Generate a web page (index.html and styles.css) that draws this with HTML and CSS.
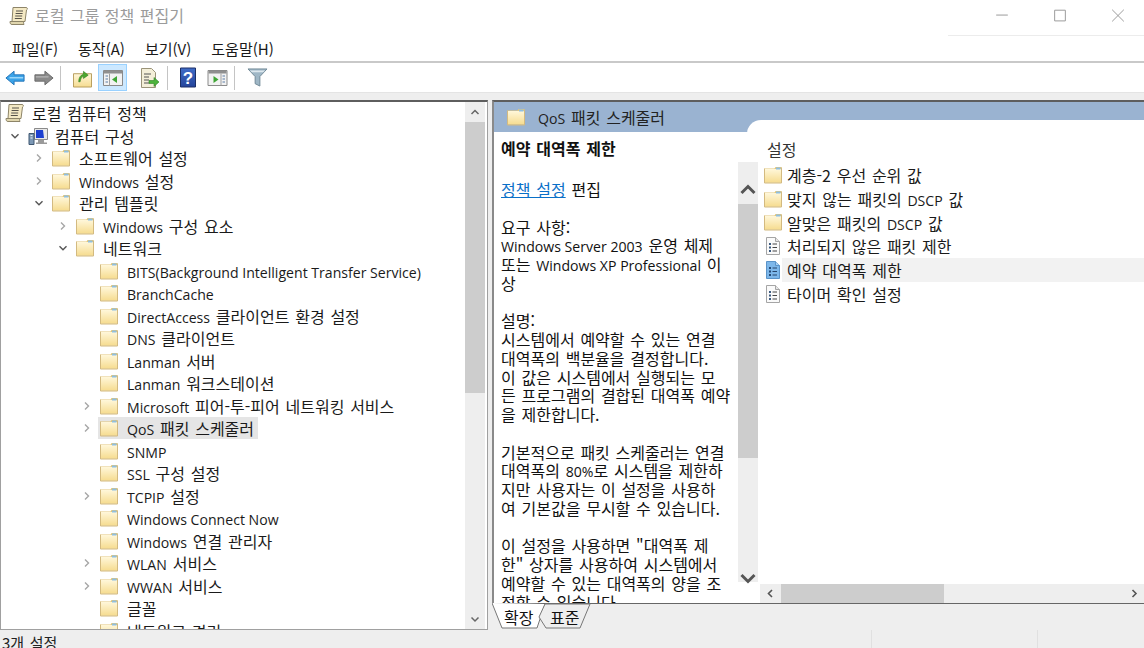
FILE: index.html
```html
<!DOCTYPE html>
<html lang="ko">
<head>
<meta charset="utf-8">
<title>로컬 그룹 정책 편집기</title>
<link rel="stylesheet" href="styles.css">
</head>
<body>
<svg class="defs" width="0" height="0" aria-hidden="true">
  <defs>
    <linearGradient id="fg" x1="0" y1="0" x2="0" y2="1"><stop offset="0" stop-color="#fff7da"/><stop offset="1" stop-color="#f6dc90"/></linearGradient>
    <linearGradient id="hg" x1="0" y1="0" x2="0" y2="1"><stop offset="0" stop-color="#3f6cc8"/><stop offset="1" stop-color="#24449a"/></linearGradient>
    <symbol id="folder" viewBox="0 0 18 18">
      <path d="M.5 2.5h10l1-1.5h5.8a.7.7 0 0 1 .2.5V16.500H.5z" fill="#e4c678"/>
      <path d="M1 3h16v13.500H1z" fill="url(#fg)"/>
      <path d="M.5 2.500V17h17V1.500" fill="none" stroke="#d3ba80"/>
      <path d="M12 1.500h4.500v2H12z" fill="#8fbfe0"/>
    </symbol>
    <symbol id="scroll" viewBox="0 0 20 20">
      <path d="M4 1.500h13c1.500 0 2 1.800.5 2.500L16 15.500H3z" fill="#f4e9c4" stroke="#8d8468"/>
      <path d="M1 15.500h13.500c0 2 .5 3 .5 3H3c-1.500 0-2-1-2-3z" fill="#e0d6ae" stroke="#8d8468"/>
      <path d="M7 5h7M6.600 7.500h7M6.200 10h7M5.800 12.500h7" stroke="#56524a" stroke-width="1"/>
    </symbol>
    <symbol id="doc" viewBox="0 0 18 18">
      <path d="M2.500.5h9l4 4v13h-13z" fill="#fafafa" stroke="#a5a5a5"/>
      <path d="M11.500.5v4h4" fill="#e6e6e6" stroke="#a5a5a5"/>
      <path d="M5 6h2v2H5zM5 9.500h2v2H5zM5 13h2v2H5z" fill="#3b5a80"/>
      <path d="M8.500 7h4.500M8.500 10.500h4.500M8.500 14h4.500" stroke="#444" stroke-width="1"/>
    </symbol>
    <symbol id="docsel" viewBox="0 0 18 18">
      <path d="M2.500.5h9l4 4v13h-13z" fill="#7db7ea" stroke="#5a93c8"/>
      <path d="M11.500.5v4h4" fill="#a9d1f2" stroke="#5a93c8"/>
      <path d="M5 6h2v2H5zM5 9.500h2v2H5zM5 13h2v2H5z" fill="#234a78"/>
      <path d="M8.500 7h4.500M8.500 10.500h4.500M8.500 14h4.500" stroke="#27456b" stroke-width="1"/>
    </symbol>
    <symbol id="chev-r" viewBox="0 0 10 10"><path d="M3 1.500 6.500 5 3 8.500" fill="none" stroke="#a6a6a6" stroke-width="1.400"/></symbol>
    <symbol id="chev-d" viewBox="0 0 10 10"><path d="M1.500 3.200 5 6.700l3.500-3.500" fill="none" stroke="#555" stroke-width="1.400"/></symbol>
  </defs>
</svg>
<div class="window">
  <header class="titlebar">
    <svg class="title-icon"><use href="#scroll"/></svg>
    <span class="title-text">로컬 그룹 정책 편집기</span>
    <div class="caption">
      <svg class="cap" viewBox="0 0 46 36"><path d="M17 15.500h12" stroke="#999" stroke-width="1"/></svg>
      <svg class="cap" viewBox="0 0 46 36"><path d="M17.500 10.500h11v11h-11z" fill="none" stroke="#999" stroke-width="1"/></svg>
      <svg class="cap" viewBox="0 0 46 36"><path d="M17 10l12 12M29 10 17 22" stroke="#999" stroke-width="1"/></svg>
    </div>
  </header>
  <nav class="menubar">
    <span class="menu">파일(F)</span>
    <span class="menu">동작(A)</span>
    <span class="menu">보기(V)</span>
    <span class="menu">도움말(H)</span>
  </nav>
  <div class="toolbar">
    <svg class="tool t-back" viewBox="0 0 22 18"><path d="M1 9 10 1.500V5.500h11v7H10v4z" fill="#3ba3e8" stroke="#1f6fb5"/><path d="M5 8h15v1.500H5z" fill="#a5dcfb"/></svg>
    <svg class="tool t-fwd" viewBox="0 0 22 18"><path d="M21 9 12 1.500V5.500H1v7h11v4z" fill="#8a8a8a" stroke="#666"/><path d="M2 7h14v1.500H2z" fill="#b5b5b5"/></svg>
    <i class="tsep s1"></i>
    <svg class="tool t-up" viewBox="0 0 20 20"><path d="M.5 5.500h19v14H.5z" fill="url(#fg)" stroke="#b59b58"/><path d="M6 14c0-4 1.500-7 5-8V3l5 4-5 3.500V8C9 8.800 8 11 7.500 14z" fill="#4ba82e" stroke="#2f7a1c" stroke-width=".6"/></svg>
    <span class="tbtn"><svg class="tool-in" viewBox="0 0 20 16"><path d="M.5.500h19v15H.5z" fill="#f2f2f2" stroke="#8a8a8a"/><path d="M1 1h18v2.500H1z" fill="#8f8f8f"/><path d="M6.500 3.500v12" stroke="#a0a0a0"/><path d="M2.500 6h2.500M2.500 9h2.500M2.500 12h2.500" stroke="#5b7ca6" stroke-width="1.200"/><path d="M9 9.500 14 6v7z" fill="#3fa535"/></svg></span>
    <svg class="tool t-doc" viewBox="0 0 20 20"><path d="M1.500.5h10l4 4v15h-14z" fill="#f4efd9" stroke="#9a9379"/><path d="M4 6h7M4 9h5M4 12h5M4 15h5" stroke="#555"/><path d="M9 12.500h5V9.500l5 4.500-5 4.500v-3H9z" fill="#4db33d" stroke="#2f8423" stroke-width=".6"/></svg>
    <i class="tsep s2"></i>
    <svg class="tool t-help" viewBox="0 0 16 20"><path d="M.5.500h15v19H.5z" fill="url(#hg)" stroke="#1c2f66"/><text x="8" y="16" class="help-q">?</text></svg>
    <svg class="tool t-show" viewBox="0 0 20 16"><path d="M.5.500h19v15H.5z" fill="#f2f2f2" stroke="#8a8a8a"/><path d="M1 1h18v2.500H1z" fill="#8f8f8f"/><path d="M13.500 3.500v12" stroke="#a0a0a0"/><path d="M15 6h2.500M15 9h2.500M15 12h2.500" stroke="#5b7ca6" stroke-width="1.200"/><path d="M11 9.500 6 6v7z" fill="#3fa535"/></svg>
    <i class="tsep s3"></i>
    <svg class="tool t-filter" viewBox="0 0 22 20"><path d="M1 1h20l-7.500 8v10l-5-2.500V9z" fill="#9fb7c6" stroke="#6f8796"/><path d="M3 2.500h16l-2 2H5z" fill="#dde8ee"/></svg>
  </div>
  <div class="strip"></div>
  <main class="panes">
    <section class="tree-pane">
      <div class="tree">
        <div class="row l0"><svg class="ico root-ico"><use href="#scroll"/></svg><span class="lbl">로컬 컴퓨터 정책</span></div>
        <div class="row l1"><svg class="chev"><use href="#chev-d"/></svg><svg class="ico" viewBox="0 0 20 20"><path d="M6.500 2.500h13v11h-13z" fill="#e8e8e8" stroke="#8a8a8a"/><path d="M8 4h7l1 8H8z" fill="#1c3fd0"/><path d="M10 13.500h6v3h3v1.500H8v-1.500h2z" fill="#9a9a9a"/><path d="M1 7.500h5v11H1z" fill="#7c98b5" stroke="#3e5670"/><path d="M2.500 9.500h2M2.500 12h2" stroke="#e8eef4"/></svg><span class="lbl">컴퓨터 구성</span></div>
        <div class="row l2"><svg class="chev"><use href="#chev-r"/></svg><svg class="ico"><use href="#folder"/></svg><span class="lbl">소프트웨어 설정</span></div>
        <div class="row l2"><svg class="chev"><use href="#chev-r"/></svg><svg class="ico"><use href="#folder"/></svg><span class="lbl"><span class="en">Windows</span> 설정</span></div>
        <div class="row l2"><svg class="chev"><use href="#chev-d"/></svg><svg class="ico"><use href="#folder"/></svg><span class="lbl">관리 템플릿</span></div>
        <div class="row l3"><svg class="chev"><use href="#chev-r"/></svg><svg class="ico"><use href="#folder"/></svg><span class="lbl"><span class="en">Windows</span> 구성 요소</span></div>
        <div class="row l3"><svg class="chev"><use href="#chev-d"/></svg><svg class="ico"><use href="#folder"/></svg><span class="lbl">네트워크</span></div>
        <div class="row l4"><i class="nochev"></i><svg class="ico"><use href="#folder"/></svg><span class="lbl"><span class="en">BITS(Background Intelligent Transfer Service)</span></span></div>
        <div class="row l4"><i class="nochev"></i><svg class="ico"><use href="#folder"/></svg><span class="lbl"><span class="en">BranchCache</span></span></div>
        <div class="row l4"><i class="nochev"></i><svg class="ico"><use href="#folder"/></svg><span class="lbl"><span class="en">DirectAccess</span> 클라이언트 환경 설정</span></div>
        <div class="row l4"><i class="nochev"></i><svg class="ico"><use href="#folder"/></svg><span class="lbl"><span class="en">DNS</span> 클라이언트</span></div>
        <div class="row l4"><i class="nochev"></i><svg class="ico"><use href="#folder"/></svg><span class="lbl"><span class="en">Lanman</span> 서버</span></div>
        <div class="row l4"><i class="nochev"></i><svg class="ico"><use href="#folder"/></svg><span class="lbl"><span class="en">Lanman</span> 워크스테이션</span></div>
        <div class="row l4"><svg class="chev"><use href="#chev-r"/></svg><svg class="ico"><use href="#folder"/></svg><span class="lbl"><span class="en">Microsoft</span> 피어-투-피어 네트워킹 서비스</span></div>
        <div class="row l4"><svg class="chev"><use href="#chev-r"/></svg><span class="sel"><svg class="ico"><use href="#folder"/></svg><span class="lbl"><span class="en">QoS</span> 패킷 스케줄러</span></span></div>
        <div class="row l4"><i class="nochev"></i><svg class="ico"><use href="#folder"/></svg><span class="lbl"><span class="en">SNMP</span></span></div>
        <div class="row l4"><i class="nochev"></i><svg class="ico"><use href="#folder"/></svg><span class="lbl"><span class="en">SSL</span> 구성 설정</span></div>
        <div class="row l4"><svg class="chev"><use href="#chev-r"/></svg><svg class="ico"><use href="#folder"/></svg><span class="lbl"><span class="en">TCPIP</span> 설정</span></div>
        <div class="row l4"><i class="nochev"></i><svg class="ico"><use href="#folder"/></svg><span class="lbl"><span class="en">Windows Connect Now</span></span></div>
        <div class="row l4"><i class="nochev"></i><svg class="ico"><use href="#folder"/></svg><span class="lbl"><span class="en">Windows</span> 연결 관리자</span></div>
        <div class="row l4"><svg class="chev"><use href="#chev-r"/></svg><svg class="ico"><use href="#folder"/></svg><span class="lbl"><span class="en">WLAN</span> 서비스</span></div>
        <div class="row l4"><svg class="chev"><use href="#chev-r"/></svg><svg class="ico"><use href="#folder"/></svg><span class="lbl"><span class="en">WWAN</span> 서비스</span></div>
        <div class="row l4"><i class="nochev"></i><svg class="ico"><use href="#folder"/></svg><span class="lbl">글꼴</span></div>
        <div class="row l4"><i class="nochev"></i><svg class="ico"><use href="#folder"/></svg><span class="lbl">네트워크 격리</span></div>
      </div>
      <div class="vscroll tree-scroll">
        <svg class="sb-arrow" viewBox="0 0 20 20"><path d="M6.500 12 10 8.500l3.500 3.500" fill="none" stroke="#666" stroke-width="1.500"/></svg>
        <div class="sb-track"><div class="sb-thumb"></div></div>
        <svg class="sb-arrow" viewBox="0 0 20 20"><path d="M6.500 8.500 10 12l3.500-3.500" fill="none" stroke="#666" stroke-width="1.500"/></svg>
      </div>
    </section>
    <section class="detail-col">
      <div class="detail-pane">
        <div class="banner">
          <svg class="ban-ico"><use href="#folder"/></svg>
          <span class="ban-text"><span class="en">QoS</span> 패킷 스케줄러</span>
        </div>
        <div class="detail-body">
          <article class="desc">
            <h1 class="desc-title">예약 대역폭 제한</h1>
            <p class="desc-link"><a class="link">정책 설정</a> 편집</p>
            <p class="para">요구 사항:<br><span class="en">Windows Server 2003</span> 운영 체제<br>또는 <span class="en">Windows XP Professional</span> 이<br>상</p>
            <p class="para">설명:<br>시스템에서 예약할 수 있는 연결<br>대역폭의 백분율을 결정합니다.<br>이 값은 시스템에서 실행되는 모<br>든 프로그램의 결합된 대역폭 예약<br>을 제한합니다.</p>
            <p class="para">기본적으로 패킷 스케줄러는 연결<br>대역폭의 <span class="en">80%</span>로 시스템을 제한하<br>지만 사용자는 이 설정을 사용하<br>여 기본값을 무시할 수 있습니다.</p>
            <p class="para">이 설정을 사용하면 "대역폭 제<br>한" 상자를 사용하여 시스템에서<br>예약할 수 있는 대역폭의 양을 조<br>정할 수 있습니다.</p>
          </article>
          <div class="vscroll desc-scroll">
            <svg class="big-arrow" viewBox="0 0 20 20"><path d="M3.500 13 10 6.500 16.500 13" fill="none" stroke="#555" stroke-width="3"/></svg>
            <div class="sb-track"><div class="ds-thumb"></div></div>
            <svg class="big-arrow" viewBox="0 0 20 20"><path d="M3.500 7 10 13.500 16.500 7" fill="none" stroke="#555" stroke-width="3"/></svg>
          </div>
          <div class="settings">
            <div class="set-head">설정</div>
            <ul class="set-list">
              <li class="item"><svg class="ico"><use href="#folder"/></svg><span class="lbl">계층-2 우선 순위 값</span></li>
              <li class="item"><svg class="ico"><use href="#folder"/></svg><span class="lbl"><span>맞지 않는 패킷의 <span class="en">DSCP</span> 값</span></span></li>
              <li class="item"><svg class="ico"><use href="#folder"/></svg><span class="lbl"><span>알맞은 패킷의 <span class="en">DSCP</span> 값</span></span></li>
              <li class="item"><svg class="ico"><use href="#doc"/></svg><span class="lbl">처리되지 않은 패킷 제한</span></li>
              <li class="item active"><svg class="ico"><use href="#docsel"/></svg><span class="lbl">예약 대역폭 제한</span></li>
              <li class="item"><svg class="ico"><use href="#doc"/></svg><span class="lbl">타이머 확인 설정</span></li>
            </ul>
            <div class="hscroll">
              <svg class="h-arrow" viewBox="0 0 20 19"><path d="M12 6 8.500 9.500 12 13" fill="none" stroke="#555" stroke-width="1.600"/></svg>
              <div class="h-track"><div class="h-thumb"></div></div>
              <svg class="h-arrow" viewBox="0 0 20 19"><path d="M8.500 6 12 9.500 8.500 13" fill="none" stroke="#555" stroke-width="1.600"/></svg>
            </div>
          </div>
        </div>
      </div>
      <div class="tabs">
        <svg class="tabs-line" width="110" height="27" viewBox="0 0 110 27"><path d="M0 0 10 25H45L53 1" fill="#fff" stroke="#777"/><path d="M47 14 53 1h45l-10 24H54z" fill="#eee" stroke="#777"/></svg>
        <span class="tab t1">확장</span>
        <span class="tab t2">표준</span>
      </div>
    </section>
  </main>
  <footer class="status">
    <span class="st-a">3개 설정</span>
    <span class="st-b"></span>
    <span class="st-c"></span>
  </footer>
</div>
</body>
</html>
```
FILE: styles.css
```css
* { box-sizing: border-box; }
html, body { margin: 0; padding: 0; height: 100%; overflow: hidden; background: #fff; }
body { font-family: "Noto Sans CJK KR", "Noto Sans", sans-serif; font-size: 16px; word-spacing: 1.300px; color: #1a1a1a; }
.en { font-family: "Open Sans", "Noto Sans", sans-serif; font-size: 14.100px; word-spacing: 0; line-height: 1; }
.defs { position: absolute; }
.window { width: 1144px; height: 648px; display: flex; flex-direction: column; overflow: hidden; }

.titlebar { height: 36px; flex: none; display: flex; align-items: center; padding-left: 9px; position: relative; }
.title-icon { width: 20px; height: 20px; margin-right: 6px; margin-top: -5px; }
.title-text { color: #9b9b9b; margin-top: -7px; word-spacing: 1px; }
.caption { margin-left: auto; width: 196px; height: 36px; display: flex; justify-content: flex-end; border-bottom: 1px solid #ececec; padding-right: 3px; gap: 12px; }
.cap { width: 46px; height: 35px; }

.menubar { height: 27px; flex: none; display: flex; align-items: center; padding-left: 12px; gap: 20px; border-bottom: 2px solid #c9c9c9; font-size: 15px; color: #1a1a1a; }

.toolbar { height: 29px; flex: none; display: flex; align-items: center; background: #fff; padding-left: 5px; }
.tool { display: block; flex: none; }
.t-back { width: 20px; height: 18px; }
.t-fwd { width: 20px; height: 18px; margin-left: 9px; }
.tsep { width: 1px; height: 24px; background: #c4c4c4; flex: none; }
.s1 { margin-left: 6px; }
.t-up { width: 19px; height: 20px; margin-left: 12px; }
.tbtn { width: 29px; height: 27px; margin-left: 6px; background: #cce8ff; border: 1px solid #99d1ff; display: flex; align-items: center; justify-content: center; flex: none; }
.tool-in { width: 20px; height: 16px; }
.t-doc { width: 20px; height: 20px; margin-left: 13px; }
.s2 { margin-left: 7px; }
.t-help { width: 16px; height: 21px; margin-left: 12px; }
.help-q { font: bold 17px "Liberation Sans", sans-serif; fill: #fff; text-anchor: middle; }
.t-show { width: 21px; height: 16px; margin-left: 11px; }
.s3 { margin-left: 6px; }
.t-filter { width: 21px; height: 19px; margin-left: 12px; }

.strip { height: 8px; flex: none; background: #eee; border-top: 1px solid #e4e4e4; }

.panes { flex: 1; min-height: 0; display: flex; background: #eee; }
.tree-pane { width: 488px; flex: none; height: 530px; display: flex; background: #fff; border: 1px solid #a0a0a0; border-top: 2px solid #5e5e5e; overflow: hidden; }
.tree { flex: 1; min-width: 0; overflow: hidden; }
.row { height: 22.500px; display: flex; align-items: center; white-space: nowrap; }
.chev, .nochev { width: 10px; height: 10px; flex: none; margin-right: 8px; display: block; }
.ico { width: 18px; height: 18px; flex: none; display: block; }
.root-ico { width: 20px; height: 20px; }
.lbl { margin-left: 9px; }
.l0 { padding-left: 4px; }
.l0 .lbl { margin-left: 7px; }
.l1 { padding-left: 9px; }
.l1 .ico { width: 20px; height: 20px; }
.l1 .lbl { margin-left: 7px; }
.l2 { padding-left: 33px; }
.l3 { padding-left: 57px; }
.l4 { padding-left: 81px; }
.sel { display: flex; align-items: center; background: #e5e5e5; height: 22px; margin-left: -2px; padding-left: 2px; padding-right: 4px; }

.vscroll { flex: none; display: flex; flex-direction: column; background: #eee; width: 20px; }
.sb-arrow { width: 20px; height: 20px; flex: none; display: block; }
.sb-track { flex: 1; min-height: 0; }
.sb-thumb { height: 271px; background: #cdcdcd; }
.tree-scroll { margin-right: 2px; height: 527px; }

.detail-col { flex: 1; min-width: 0; margin-left: 4px; display: flex; flex-direction: column; }
.detail-pane { height: 504px; flex: none; background: #fff; border-top: 2px solid #5e5e5e; border-left: 2px solid #8a8a8a; border-bottom: 1px solid #666; display: flex; flex-direction: column; overflow: hidden; }
.banner { height: 30px; flex: none; background: #9ab3d1; display: flex; align-items: center; padding-left: 13px; position: relative; }
.banner::after { content: ""; position: absolute; right: 0; top: 18px; left: 253px; height: 14px; background: #fff; border-radius: 14px 0 0 0; }
.ban-ico { width: 18px; height: 18px; }
.ban-text { margin-left: 13px; color: #222; }

.detail-body { flex: 1; min-height: 0; display: flex; }
.desc { width: 244px; flex: none; padding: 6px 0 0 7px; overflow: hidden; line-height: 18.750px; color: #111; white-space: nowrap; }
.desc-title { margin: 0; font-size: 16px; font-weight: 700; line-height: 20px; }
.desc-link { margin: 22px 0 0; }
.para { margin: 18.750px 0 0; }
.link { color: #0a70c8; text-decoration: underline; }
.desc-scroll { width: 20px; margin-top: 30px; height: 420px; }
.big-arrow { width: 20px; height: 20px; flex: none; display: block; margin: 18px 0 4px; }
.ds-thumb { height: 254px; background: #cdcdcd; }
.desc-scroll .big-arrow:last-child { margin: 0 0 -6px; }

.settings { flex: 1; min-width: 0; margin-left: 2px; display: flex; flex-direction: column; }
.set-head { height: 31px; padding: 7px 0 0 7px; color: #333; line-height: 20px; flex: none; }
.set-list { list-style: none; margin: 0; padding: 0; flex: 1; min-height: 0; }
.item { height: 23.800px; display: flex; align-items: center; padding-left: 4px; white-space: nowrap; }
.item .lbl { margin-left: 0; padding-left: 5px; flex: 1; height: 100%; display: flex; align-items: center; }
.item.active .lbl { background: #f2f2f2; }
.hscroll { height: 19px; flex: none; display: flex; background: #eee; }
.h-arrow { width: 20px; height: 19px; flex: none; display: block; }
.h-track { flex: 1; min-width: 0; }
.h-thumb { width: 163px; height: 100%; background: #cdcdcd; margin-left: 1px; }

.tabs { flex: 1; min-height: 0; position: relative; display: flex; }
.tabs-line { position: absolute; left: 0; top: -1px; }
.tab { position: absolute; top: 3px; color: #111; line-height: 20px; }
.t1 { left: 12px; }
.t2 { left: 58px; }

.status { height: 18px; flex: none; background: #eee; display: flex; font-size: 15px; color: #222; }
.st-a { width: 872px; padding-left: 2px; line-height: 26px; white-space: nowrap; border-right: 1px solid #e0e0e0; }
.st-b { width: 166px; border-right: 1px solid #e0e0e0; }
.st-c { flex: 1; }
```
